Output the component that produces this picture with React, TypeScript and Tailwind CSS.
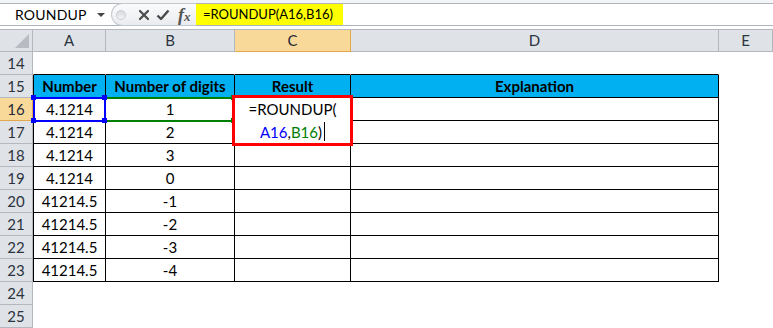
import React from "react";

const F = { fontFamily: "Lato, 'Open Sans', sans-serif" };

const tableRows: string[][] = [
  ["Number", "Number of digits", "Result", "Explanation"],
  ["4.1214", "1", "", ""],
  ["4.1214", "2", "", ""],
  ["4.1214", "3", "", ""],
  ["4.1214", "0", "", ""],
  ["41214.5", "-1", "", ""],
  ["41214.5", "-2", "", ""],
  ["41214.5", "-3", "", ""],
  ["41214.5", "-4", "", ""],
];

function RowHeader({ n, sel }: { n: number; sel?: boolean }) {
  return (
    <div
      className={`w-[33px] shrink-0 h-full flex items-center justify-center border-r border-b text-[15px] ${
        sel
          ? "bg-[#f8d99a] border-r-[#e3a84a] border-b-[#e3a84a] text-[#1f2a36]"
          : "bg-[#dfe2e6] border-[#b3b8be] text-[#2b3440]"
      }`}
    >
      {n}
    </div>
  );
}

function SheetRow({ n, cells, sel }: { n: number; cells?: string[] | null; sel?: boolean }) {
  const isHeader = n === 15;
  const inTable = !!cells;
  const topOfTable = n === 14;
  const widths = ["w-[73px]", "w-[129px]", "w-[116px]", "w-[368px]"];
  return (
    <div className="flex h-[23px]">
      <RowHeader n={n} sel={sel} />
      {widths.map((w, i) => (
        <div
          key={i}
          className={`${w} shrink-0 h-full flex items-center justify-center border-r border-b text-[15px] text-black ${
            i === 0 ? "border-l" : ""
          } ${
            inTable
              ? "border-black"
              : topOfTable
              ? "border-l-transparent border-r-transparent border-b-black"
              : "border-transparent"
          } ${isHeader ? "bg-[#00b0f0] font-bold" : "bg-white"}`}
        >
          {cells ? cells[i] : ""}
        </div>
      ))}
      <div className="flex-1 h-full bg-white" />
    </div>
  );
}

export default function App() {
  return (
    <div className="w-[773px] h-[328px] overflow-hidden bg-white relative" style={F}>
      {/* formula bar */}
      <div className="h-[26px] flex flex-col bg-[#eef0f3]">
        <div className="h-[3px] bg-[#f3f4f6]" />
        <div className="flex-1 flex bg-white border-t border-b border-[#aeb4bb]">
          <div className="w-[111px] flex items-center pl-[15px] pr-[6px] text-[14px] text-black">
            <span className="flex-1 tracking-[0.2px]">ROUNDUP</span>
            <span className="w-0 h-0 border-l-[4px] border-r-[4px] border-t-[4px] border-l-transparent border-r-transparent border-t-[#444]" />
          </div>
          <div className="w-[85px] flex items-center rounded-l-full border-l border-t border-b border-[#c3c8ce] bg-gradient-to-b from-[#fbfbfc] to-[#e9ecef] -my-px">
            <div className="ml-[4px] w-[10px] h-[10px] rounded-full bg-gradient-to-b from-[#d5d9de] to-[#f4f5f7] border border-[#c9cdd2]" />
            <svg className="ml-[12px]" width="12" height="12" viewBox="0 0 12 12">
              <path d="M2 2 L10 10 M10 2 L2 10" stroke="#4a4a4a" strokeWidth="2.2" strokeLinecap="round" />
            </svg>
            <svg className="ml-[6px]" width="14" height="12" viewBox="0 0 14 12">
              <path d="M1.5 6.5 L5 10 L12.5 1.5" stroke="#4a4a4a" strokeWidth="2.4" fill="none" strokeLinejoin="round" />
            </svg>
            <span
              className="ml-[8px] italic font-bold text-[18px] text-[#555] leading-none"
              style={{ fontFamily: "'Liberation Serif', serif" }}
            >
              f<span className="text-[13px]">x</span>
            </span>
          </div>
          <div className="flex-1 flex items-stretch">
            <div className="w-[147px] bg-[#ffff00] flex items-center pl-[7px] text-[13px] text-black">
              =ROUNDUP(A16,B16)
            </div>
          </div>
        </div>
      </div>
      <div className="h-[3px] bg-white" />
      {/* column headers */}
      <div className="flex h-[23px] border-t border-[#b3b8be]">
        <div className="w-[33px] shrink-0 h-full bg-[#dfe2e6] border-r border-b border-[#b3b8be] relative">
          <svg className="absolute right-[3px] bottom-[3px]" width="14" height="14" viewBox="0 0 14 14">
            <polygon points="14,0 14,14 0,14" fill="#b8bcc2" />
          </svg>
        </div>
        {[
          ["A", "w-[73px]", false],
          ["B", "w-[129px]", false],
          ["C", "w-[116px]", true],
          ["D", "w-[368px]", false],
        ].map(([l, w, s]) => (
          <div
            key={l as string}
            className={`${w} shrink-0 h-full flex items-center justify-center border-r border-b text-[15px] ${
              s
                ? "bg-[#f8d99a] border-r-[#e3a84a] border-b-[#e3a84a] text-[#1f2a36]"
                : "bg-[#dfe2e6] border-[#b3b8be] text-[#2b3440]"
            }`}
          >
            {l as string}
          </div>
        ))}
        <div className="flex-1 h-full flex items-center justify-center bg-[#dfe2e6] border-r border-b border-[#b3b8be] text-[15px] text-[#2b3440]">
          E
        </div>
      </div>
      {/* body */}
      <div className="relative">
        <SheetRow n={14} cells={null} />
        {tableRows.map((r, i) => (
          <SheetRow key={i} n={15 + i} cells={r} sel={15 + i === 16} />
        ))}
        <SheetRow n={24} cells={null} />
        <SheetRow n={25} cells={null} />

        {/* A16 blue reference box */}
        <div className="absolute left-[33px] top-[45px] w-[73px] h-[25px] border-2 border-[#0000ff]" />
        {/* B16 green reference box */}
        <div className="absolute left-[104px] top-[45px] w-[131px] h-[25px] border-2 border-[#008000] border-l-0" />
        {/* handles */}
        <div className="absolute left-[31px] top-[43px] w-[5px] h-[5px] bg-[#0000ff]" />
        <div className="absolute left-[31px] top-[66px] w-[5px] h-[5px] bg-[#0000ff]" />
        <div className="absolute left-[102px] top-[43px] w-[5px] h-[5px] bg-[#0000ff]" />
        <div className="absolute left-[102px] top-[66px] w-[5px] h-[5px] bg-[#0000ff]" />
        <div className="absolute left-[231px] top-[43px] w-[5px] h-[5px] bg-[#008000]" />
        <div className="absolute left-[231px] top-[66px] w-[5px] h-[5px] bg-[#008000]" />

        {/* cell editor */}
        <div className="absolute left-[232px] top-[43px] w-[121px] h-[51px] border-[3px] border-[#ff0000] bg-white flex flex-col items-center text-[15px] text-black">
          <div className="h-[23px] flex items-center">=ROUNDUP(</div>
          <div className="h-[23px] flex items-center">
            <span className="text-[#0000ff]">A16</span>
            <span>,</span>
            <span className="text-[#008000]">B16</span>
            <span>)</span>
            <span className="ml-[2px] w-px h-[19px] bg-black" />
          </div>
        </div>
        <div className="absolute left-[353px] top-[68px] w-[4px] h-px bg-black" />
      </div>
    </div>
  );
}
